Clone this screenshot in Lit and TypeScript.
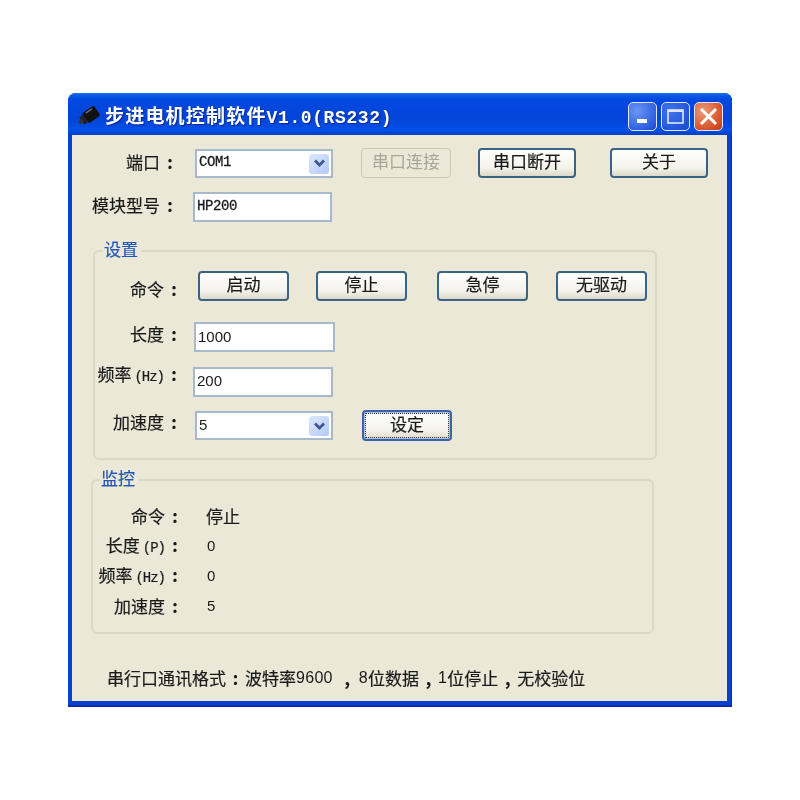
import { LitElement, html, css } from "lit";
import { customElement } from "lit/decorators.js";

@customElement("app-root")
export class AppRoot extends LitElement {
  static styles = css`
    :host { display: block; width: 800px; height: 800px; background: #fff; padding: 93px 0 0 68px; box-sizing: border-box;
      font-family: "Noto Sans CJK SC", "Liberation Sans", sans-serif; color: #1a1a1a; }
    .win { width: 664px; height: 614px; box-sizing: border-box; display: flex; flex-direction: column;
      border-radius: 8px 8px 0 0; background: #0a3fd0; padding: 0 5px 6px 4px; filter: blur(0.45px);
      box-shadow: inset 0 -2px 0 #0b2fa8, inset -1px 0 0 #0b2fa8; }
    .title { height: 42px; margin: 0 -5px 0 -4px; padding: 5px 9px 0 10px; box-sizing: border-box; display: flex; align-items: center; gap: 4px;
      border-radius: 8px 8px 0 0; background: linear-gradient(#1f72f0 0, #0a5ce6 6%, #0349e0 15%, #0344d8 60%, #0450e6 88%, #0340c8 100%); }
    .icon { width: 22px; height: 22px; margin-right: 1px; margin-top: -1px; }
    .ttext { font-size: 19px; font-weight: 700; letter-spacing: 1.2px; color: #fff; text-shadow: 1px 1px 1px #0a2a90; white-space: nowrap; line-height: 24px; flex: 1; }
    .ttext .m { font-family: "Liberation Mono", monospace; font-size: 18px; letter-spacing: 0.6px; }
    .wb { width: 29px; height: 29px; box-sizing: border-box; border: 1px solid #dfe8fb; border-radius: 5px; display: flex; align-items: center; justify-content: center; }
    .min { background: radial-gradient(circle at 30% 30%, #6a96f4, #2f60e2 70%, #1c46c8); }
    .max { background: radial-gradient(circle at 30% 30%, #3f74ea, #2256da 70%, #1c46c8); }
    .cls { background: radial-gradient(circle at 30% 30%, #ee9a78, #d8552e 65%, #c23c16); }
    .client { flex: 1; background: #ebe8d8; padding: 13px 0 0 0; display: flex; flex-direction: column; box-sizing: border-box; }

    .row { display: flex; align-items: center; }
    .lab { font-size: 17px; font-weight: 400; -webkit-text-stroke: 0.2px #1a1a1a; line-height: 22px; white-space: nowrap; text-align: right; }
    .colon { font-weight: 700; display: inline-block; width: 20px; text-align: center; }
    .hz { font-family: "Liberation Mono", monospace; font-size: 14px; letter-spacing: -1px; margin-left: 3px; }

    .tb, .cb { box-sizing: border-box; height: 30px; border: 2px solid #a6bacb; background: #fff; display: flex; align-items: center; padding: 0 0 2px 2px;
      font-family: "Liberation Mono", monospace; font-size: 14px; color: #1a1a1a; }
    .cb { position: relative; height: 29px; }
    .cond { letter-spacing: -0.4px; -webkit-text-stroke: 0.3px #1a1a1a; }
    .plain { font-family: "Liberation Sans", sans-serif; font-size: 15px; }
    .arrow { position: absolute; right: 2px; top: 3px; width: 20px; height: 20px; border-radius: 3px; background: linear-gradient(135deg, #dde8fe, #b5c9f5); display: flex; align-items: center; justify-content: center; }

    .btn { box-sizing: border-box; width: 91px; height: 30px; margin: 0; border: 2px solid #3a6486; border-radius: 4px; background: linear-gradient(#fff, #f3f2ea 70%, #dcd8c8);
      font: 400 17px "Noto Sans CJK SC", sans-serif; -webkit-text-stroke: 0.2px #1a1a1a; color: #1a1a1a; display: flex; align-items: center; justify-content: center; padding: 0 0 5px; }
    .btn.dis { border: 1px solid #cbc8b6; background: #ebe8d8; color: #a8a698; -webkit-text-stroke: 0; width: 90px; }
    .btn.wide { width: 98px; }
    .btn.def { border-color: #3a64a8; outline: 1px dotted #333; outline-offset: -4px; box-shadow: inset 0 0 0 1px #a8c0ea; height: 31px; width: 90px; }

    /* top rows */
    .r1 { height: 30px; margin-bottom: 14px; }
    .r1 .lab { width: 108px; padding-bottom: 3px; }
    .r1 .cb { width: 138px; margin-left: 15px; }
    .g1 { margin-left: 28px; }
    .g2 { margin-left: 27px; }
    .g3 { margin-left: 34px; }
    .r2 { height: 30px; }
    .r2 .lab { width: 108px; padding-bottom: 4px; }
    .r2 .tb { width: 139px; margin-left: 13px; }

    /* group boxes */
    .group { position: relative; box-sizing: border-box; border: 2px solid #dbd8c9; border-radius: 6px; }
    .legend { position: absolute; top: -14px; background: #ebe8d8; color: #2456b8; font-size: 17px; -webkit-text-stroke: 0.2px #2456b8; line-height: 22px; padding: 0 3px 0 1px; }
    .set { width: 564px; height: 210px; margin: 28px 0 0 21px; padding: 19px 0 0 0; }
    .set .legend { left: 8px; }
    .set .lab { width: 89px; }
    .c1 { height: 30px; }
    .c1 .lab { padding-top: 6px; }
    .b1 { margin-left: 14px; }
    .b2 { margin-left: 27px; }
    .b3 { margin-left: 30px; }
    .b4 { margin-left: 28px; }
    .c2 { height: 30px; margin-top: 21px; }
    .c2 .lab { padding-bottom: 6px; }
    .c2 .tb { width: 141px; margin-left: 10px; }
    .c3 { height: 31px; margin-top: 14px; }
    .c3 .lab { padding-bottom: 13px; }
    .c3 .tb { width: 140px; margin-left: 9px; }
    .c4 { height: 31px; margin-top: 13px; }
    .c4 .lab { padding-bottom: 8px; }
    .c4 .cb { width: 138px; margin-left: 11px; }
    .c4 .btn { margin-left: 29px; }

    .mon { width: 563px; height: 155px; margin: 19px 0 0 19px; padding: 24px 0 0 0; }
    .mon .legend { left: 7px; }
    .mon .lab { width: 92px; }
    .mr { height: 22px; margin-bottom: 8px; }
    .val { margin-left: 21px; font-size: 17px; -webkit-text-stroke: 0.2px #1a1a1a; line-height: 22px; }
    .num { font-family: "Liberation Sans", sans-serif; font-size: 15px; -webkit-text-stroke: 0; margin-left: 22px; }
    .foot { margin: 32px 0 0 35px; font-size: 17px; -webkit-text-stroke: 0.2px #1a1a1a; line-height: 24px; white-space: nowrap; display: flex; }
    .d { font-family: "Liberation Sans", sans-serif; font-size: 16px; letter-spacing: 0.3px; -webkit-text-stroke: 0; }
    .p { display: inline-block; width: 19px; text-align: center; font-weight: 700; }
    .p.first { width: 26px; padding-left: 3px; box-sizing: border-box; }
  `;

  private arrow() {
    return html`<span class="arrow"><svg width="13" height="9" viewBox="0 0 13 9"><path d="M2 1.5 6.5 6 11 1.5" fill="none" stroke="#3d5a90" stroke-width="2.8"/></svg></span>`;
  }
  private label(t: string, sub = "") {
    return html`<div class="lab">${t}${sub ? html`<span class="hz">${sub}</span>` : ""}<span class="colon">:</span></div>`;
  }

  render() {
    return html`
      <div class="win">
        <div class="title">
          <svg class="icon" viewBox="0 0 20 20"><g transform="rotate(-35 10 10)"><rect x="6" y="4.5" width="13" height="11" rx="2" fill="#111"/><rect x="2" y="6" width="4.5" height="8" fill="#222"/><rect x="-1" y="8.5" width="4" height="3" fill="#333"/><rect x="9" y="5.5" width="7" height="1.4" fill="#667"/></g></svg>
          <div class="ttext">步进电机控制软件<span class="m">V1.0(RS232)</span></div>
          <div class="wb min"><svg width="16" height="16" viewBox="0 0 16 16"><rect x="2" y="10" width="10" height="4" fill="#fff"/></svg></div>
          <div class="wb max"><svg width="19" height="19" viewBox="0 0 19 19"><rect x="2" y="3" width="15" height="13" fill="none" stroke="#dfe8fb" stroke-width="1.6"/><rect x="2" y="3" width="15" height="2" fill="#dfe8fb"/></svg></div>
          <div class="wb cls"><svg width="21" height="21" viewBox="0 0 21 21"><path d="M3 3 18 18M18 3 3 18" stroke="#fff" stroke-width="3"/></svg></div>
        </div>
        <div class="client">
          <div class="row r1">
            ${this.label("端口")}
            <div class="cb"><span class="cond">COM1</span>${this.arrow()}</div>
            <button class="btn dis g1">串口连接</button>
            <button class="btn wide g2">串口断开</button>
            <button class="btn wide g3">关于</button>
          </div>
          <div class="row r2">
            ${this.label("模块型号")}
            <div class="tb"><span class="cond">HP200</span></div>
          </div>

          <div class="group set">
            <div class="legend">设置</div>
            <div class="row c1">
              ${this.label("命令")}
              <button class="btn b1">启动</button>
              <button class="btn b2">停止</button>
              <button class="btn b3">急停</button>
              <button class="btn b4">无驱动</button>
            </div>
            <div class="row c2">${this.label("长度")}<div class="tb"><span class="plain">1000</span></div></div>
            <div class="row c3">${this.label("频率", "(Hz)")}<div class="tb"><span class="plain">200</span></div></div>
            <div class="row c4">
              ${this.label("加速度")}
              <div class="cb"><span class="plain">5</span>${this.arrow()}</div>
              <button class="btn def">设定</button>
            </div>
          </div>

          <div class="group mon">
            <div class="legend">监控</div>
            <div class="row mr">${this.label("命令")}<div class="val">停止</div></div>
            <div class="row mr">${this.label("长度", "(P)")}<div class="val num">0</div></div>
            <div class="row mr">${this.label("频率", "(Hz)")}<div class="val num">0</div></div>
            <div class="row mr">${this.label("加速度")}<div class="val num">5</div></div>
          </div>

          <div class="foot"><span>串行口通讯格式</span><span class="p">:</span><span>波特率</span><span class="d">9600</span><span class="p first">,</span><span class="d">8</span><span>位数据</span><span class="p">,</span><span class="d">1</span><span>位停止</span><span class="p">,</span><span>无校验位</span></div>
        </div>
      </div>
    `;
  }
}
